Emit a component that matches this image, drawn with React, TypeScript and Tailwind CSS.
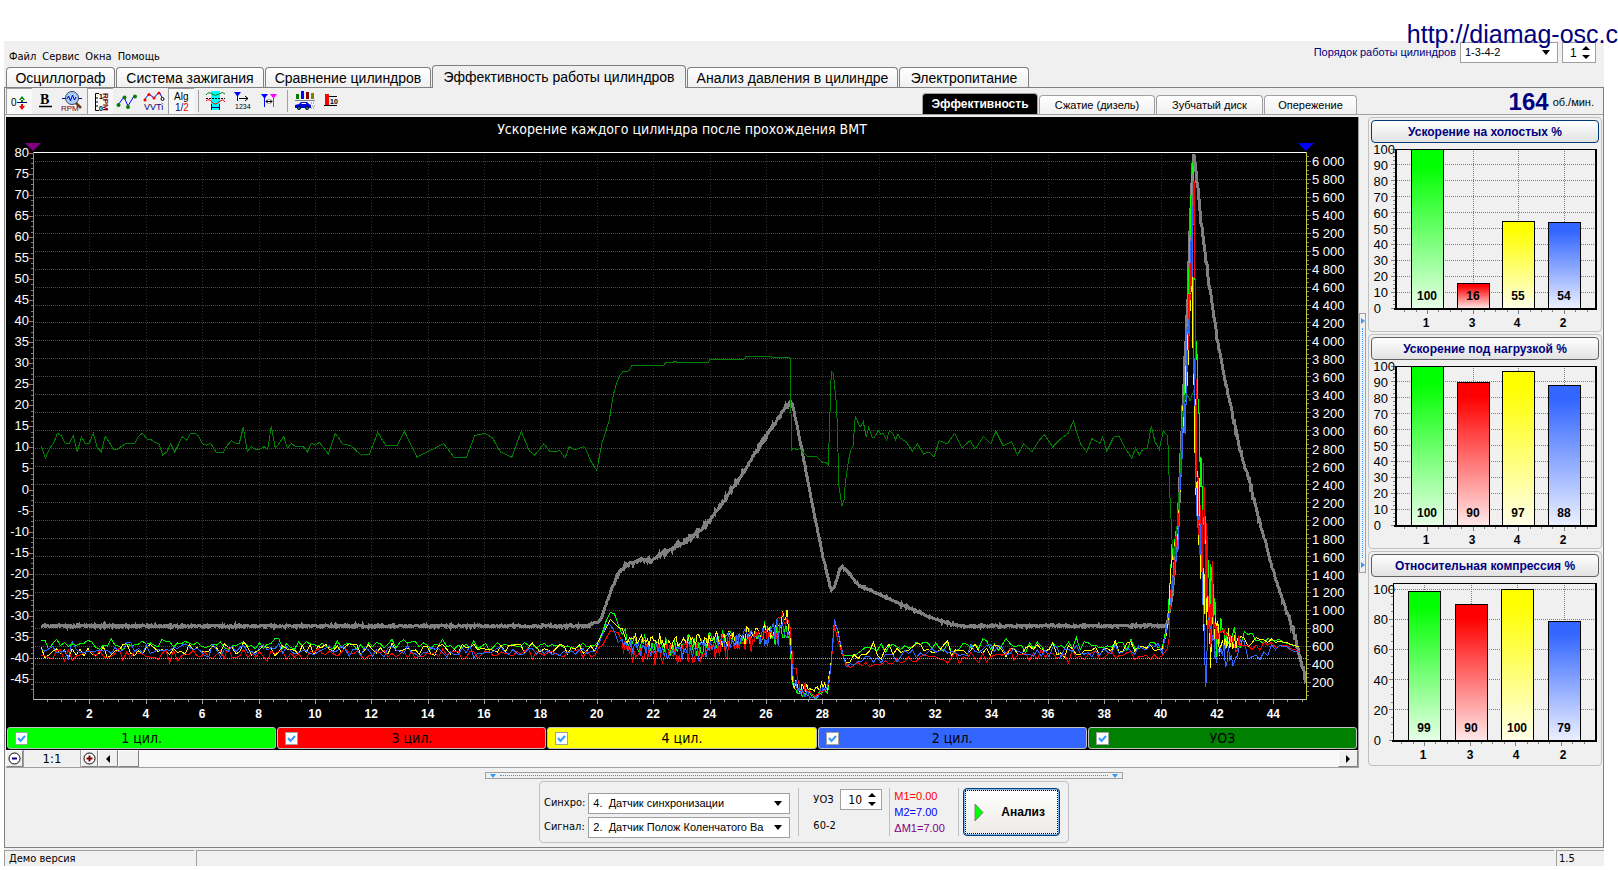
import React, { useMemo, useState } from 'react';

type Point = [number, number];
// x, y, noise amplitude
type Key = [number, number, number];

const SANS = "font-['Liberation_Sans',Arial,sans-serif]";
const TAHOMA = "font-['DejaVu_Sans_Condensed','DejaVu_Sans',Tahoma,sans-serif]";

// Plot frame of the main chart
const PLOT = { left: 33, right: 1306, top: 152, bottom: 699 };
const timeX = (t: number) => 33 + t * 28.19;
const leftY = (v: number) => 152.7 + (80 - v) * 4.21;
const rightY = (v: number) => 161.3 + (6000 - v) * 0.08983;

// Small seeded generator so the traces are the same on every render
function makeRandom(seed: number) {
  let s = seed;
  return () => {
    s = (s * 1664525 + 1013904223) % 4294967296;
    return s / 4294967296;
  };
}

function place(ox: number, oy: number, k: number, points: Point[]): Point[] {
  return points.map(([x, y]) => [ox + x * k, oy + y * k]);
}

function noisy(keys: Key[], seed: number, gain: number, stepAt: (x: number) => number): Point[] {
  const random = makeRandom(seed);
  const out: Point[] = [];
  let i = 0;
  let x = keys[0][0];
  const end = keys[keys.length - 1][0];
  while (x <= end) {
    while (i < keys.length - 2 && x > keys[i + 1][0]) i++;
    const [x0, y0, a0] = keys[i];
    const [x1, y1, a1] = keys[i + 1];
    const t = (x - x0) / (x1 - x0);
    const amp = a0 + (a1 - a0) * t;
    const n = (random() + random() - 1) * gain;
    out.push([x, Math.min(y0 + (y1 - y0) * t + n * amp, PLOT.bottom - 1)]);
    x += stepAt(x);
  }
  return out;
}

const toPath = (points: Point[]) => points.map(([x, y]) => `${x.toFixed(1)},${y.toFixed(1)}`).join(' ');

const ADVANCE: Point[] = [
  ...place(0, 410, 1 / 3, [
    [124, 108], [136, 145], [148, 117], [162, 97], [172, 70], [184, 77], [196, 100], [208, 100], [220, 78], [232, 126],
    [244, 80], [256, 100], [268, 100], [280, 69], [292, 114], [304, 125], [316, 79], [328, 97], [340, 118], [352, 118],
    [376, 101], [404, 100], [416, 78], [428, 70], [440, 87], [452, 88], [464, 98], [476, 100], [488, 135], [500, 127],
    [512, 101], [524, 126], [536, 102], [547, 80], [560, 91], [571, 70], [584, 70], [596, 78], [607, 101], [620, 106],
    [632, 100], [648, 127], [670, 127], [682, 106], [694, 92], [706, 100], [718, 100], [730, 52], [742, 125], [754, 110],
    [766, 118], [778, 118], [792, 110], [803, 118], [814, 49], [826, 114], [838, 100], [851, 79], [862, 115], [874, 101],
    [886, 108], [910, 110], [922, 126], [934, 100], [946, 106], [958, 97],
  ]),
  ...place(0, 0, 1.032, [
    [318, 440], [325, 420], [332, 430], [340, 432], [350, 441], [358, 440], [366, 419], [374, 432], [385, 432], [392, 418],
    [404, 443], [412, 439], [430, 430], [440, 443], [452, 443], [460, 422], [470, 420], [477, 424], [485, 438], [496, 443],
    [505, 418], [513, 437], [518, 441], [527, 430], [533, 438],
  ]),
  ...place(560, 340, 1 / 3, [
    [0, 332], [15, 355], [28, 320], [40, 327], [50, 327], [72, 320], [80, 333], [92, 363], [110, 391], [126, 310],
    [148, 240], [160, 165], [170, 128], [180, 106], [190, 94], [206, 93], [216, 76], [312, 76], [318, 66], [330, 68],
    [345, 65], [360, 68], [445, 67], [450, 58], [552, 58], [558, 49], [632, 50], [640, 52], [690, 52], [695, 332],
    [698, 325], [712, 330], [720, 326], [730, 338], [744, 350], [770, 350], [786, 367], [800, 369], [805, 376], [814, 94],
    [820, 100], [830, 200], [837, 440], [846, 498], [852, 480], [856, 430], [865, 365], [872, 333], [879, 318], [886, 228],
    [900, 262], [910, 245], [919, 292], [926, 262], [936, 292], [943, 292], [955, 272], [962, 282], [970, 280], [980, 300],
    [988, 272], [1000, 282], [1006, 300], [1014, 282], [1020, 294],
  ]),
  ...place(0, 0, 1.032, [
    [878, 428], [884, 437], [889, 430], [895, 440], [900, 438], [905, 443], [910, 427], [918, 430], [925, 420], [932, 434],
    [940, 427], [945, 435], [953, 423], [960, 430], [965, 418], [972, 432], [980, 428], [986, 441], [992, 430], [1000, 438],
    [1006, 428], [1012, 421], [1020, 433], [1028, 425], [1035, 420], [1040, 408], [1047, 430], [1053, 438], [1058, 425],
  ]),
  ...place(1100, 380, 1 / 3, [
    [0, 190], [8, 170], [20, 213], [42, 170], [58, 170], [70, 195], [95, 235], [107, 205], [118, 225], [130, 205],
    [142, 205], [154, 138], [165, 185], [178, 208], [190, 152], [203, 168], [208, 310], [216, 480], [222, 530], [232, 430],
    [240, 280], [248, 100], [256, 40], [265, 50], [270, 62], [282, 30],
  ]),
];

const SPEED: Key[] = [
  [41, 626, 1], [587, 626, 1], [600, 621, 1], [606, 605, 1], [612, 588, 1], [620, 570, 2], [630, 563, 2], [640, 560, 2],
  [652, 560, 2], [665, 553, 2], [680, 544, 2], [700, 531, 2], [710, 520, 2], [728, 495, 2], [745, 470, 2], [760, 445, 2],
  [775, 423, 2], [790, 401, 2], [792, 402, 1], [802, 450, 1], [812, 503, 1], [823, 557, 1], [831, 590, 1], [834, 588, 1],
  [840, 569, 1], [843, 567, 1], [850, 574, 1], [858, 585, 1], [870, 590, 1], [900, 604, 1], [930, 617, 1], [950, 624, 1],
  [965, 626, 1], [1167, 626, 1], [1172, 595, 2], [1178, 530, 4], [1182, 430, 6], [1186, 345, 8], [1188, 290, 10],
  [1190, 230, 10], [1192, 180, 8], [1194, 153, 1], [1200, 210, 4], [1205, 253, 4], [1210, 290, 4], [1218, 343, 4],
  [1227, 387, 4], [1238, 442, 3], [1247, 473, 3], [1260, 523, 3], [1273, 570, 2], [1282, 598, 2], [1290, 620, 3],
  [1300, 657, 4], [1306, 682, 4],
];

const CYL_1: Key[] = [
  [41, 645, 5], [597, 645, 3], [605, 625, 2], [610, 611, 1], [615, 613, 1], [621, 632, 4], [635, 645, 7], [700, 645, 8],
  [745, 638, 9], [760, 635, 8], [785, 630, 8], [790, 635, 8], [792, 685, 4], [800, 692, 4], [815, 696, 3], [828, 688, 3],
  [832, 660, 2], [835, 612, 1], [838, 630, 2], [843, 655, 4], [860, 652, 6], [900, 645, 6], [1164, 645, 5], [1168, 620, 3],
  [1172, 550, 16], [1178, 530, 10], [1182, 440, 16], [1187, 360, 24], [1190, 240, 20], [1193, 153, 1], [1196, 340, 20],
  [1200, 440, 30], [1204, 520, 30], [1210, 580, 30], [1216, 635, 20], [1235, 640, 8], [1260, 640, 5], [1280, 640, 1],
  [1301, 648, 1],
];

const CYL_3: Key[] = [
  [41, 656, 5], [597, 653, 4], [605, 640, 2], [612, 629, 2], [620, 640, 6], [635, 654, 8], [700, 654, 9], [740, 642, 8],
  [775, 634, 10], [782, 612, 8], [790, 625, 8], [793, 670, 8], [800, 688, 6], [815, 695, 4], [828, 688, 3], [832, 660, 2],
  [835, 618, 1], [838, 640, 2], [845, 665, 3], [860, 665, 3], [900, 661, 4], [1000, 655, 5], [1165, 655, 5], [1169, 640, 3],
  [1172, 570, 16], [1178, 540, 10], [1182, 450, 16], [1187, 360, 30], [1190, 300, 40], [1193, 230, 20], [1194, 182, 1],
  [1196, 380, 30], [1198, 520, 40], [1203, 530, 50], [1210, 590, 40], [1216, 640, 20], [1222, 632, 16], [1235, 645, 8],
  [1260, 647, 6], [1280, 644, 1], [1301, 652, 1],
];

const CYL_4: Key[] = [
  [41, 650, 6], [597, 648, 4], [605, 630, 2], [612, 620, 2], [621, 630, 6], [635, 643, 6], [700, 642, 7], [745, 635, 8],
  [775, 630, 9], [785, 618, 8], [790, 625, 8], [793, 685, 5], [800, 690, 5], [815, 689, 3], [828, 686, 3], [832, 660, 2],
  [835, 615, 1], [838, 634, 2], [845, 663, 4], [858, 657, 4], [870, 652, 8], [900, 650, 6], [1164, 650, 6], [1168, 620, 3],
  [1172, 555, 16], [1178, 535, 10], [1182, 440, 14], [1187, 370, 30], [1190, 320, 30], [1192, 290, 20], [1195, 410, 50],
  [1200, 560, 50], [1207, 610, 40], [1214, 640, 16], [1235, 640, 8], [1260, 640, 4], [1280, 641, 1], [1301, 648, 1],
];

const CYL_2: Key[] = [
  [41, 650, 6], [597, 652, 4], [605, 628, 3], [610, 620, 3], [621, 642, 6], [635, 650, 8], [700, 650, 7], [745, 638, 8],
  [775, 635, 9], [785, 628, 10], [790, 640, 8], [793, 680, 6], [800, 690, 5], [815, 696, 3], [828, 686, 3], [832, 660, 2],
  [835, 611, 1], [838, 634, 2], [845, 668, 3], [860, 662, 4], [900, 654, 6], [1164, 651, 5], [1168, 620, 3],
  [1172, 580, 12], [1178, 550, 10], [1182, 450, 16], [1187, 370, 40], [1190, 270, 40], [1192, 200, 10], [1195, 420, 60],
  [1200, 520, 40], [1203, 600, 20], [1206, 690, 2], [1208, 620, 10], [1216, 645, 16], [1225, 658, 14], [1240, 648, 8],
  [1260, 655, 5], [1280, 646, 2], [1292, 650, 1], [1302, 652, 1],
];

const stepAt = (x: number) => {
  if (x > 1176 && x < 1216) return 0.7;
  return (x > 620 && x < 830) || (x > 1166 && x < 1240) ? 1.5 : 3.9;
};

const SERIES = [
  { color: '#00ff00', points: noisy(CYL_1, 11, 1.7, stepAt) },
  { color: '#ffff00', points: noisy(CYL_4, 35, 1.7, stepAt) },
  { color: '#ff0000', points: noisy(CYL_3, 27, 1.7, stepAt) },
  { color: '#3366ff', points: noisy(CYL_2, 48, 1.7, stepAt) },
];
// Legend checkbox that switches each series
const SERIES_SWITCH = [0, 2, 1, 3];

const range = (from: number, to: number, step: number) => {
  const out: number[] = [];
  for (let v = from; v <= to + 1e-6; v += step) out.push(v);
  return out;
};

const px = (v: number) => Math.round(v) + 0.5;

function MainChart({ visible }: { visible: boolean[] }) {
  const speed = useMemo(() => noisy(SPEED, 5, 1.5, () => 0.8), []);
  return (
    <svg viewBox="6 117 1352 609" className={`block w-full ${SANS}`} role="img" aria-label="Ускорение каждого цилиндра">
      <rect x="6" y="117" width="1352" height="609" fill="#000" />
      <text x="682" y="134" fill="#fff" fontSize="14" textAnchor="middle" className={TAHOMA}>
        Ускорение каждого цилиндра после прохождения ВМТ
      </text>

      <g shapeRendering="crispEdges" fill="none">
        {range(2, 44, 2).map((t) => (
          <line key={t} x1={px(timeX(t))} x2={px(timeX(t))} y1={PLOT.top} y2={PLOT.bottom} stroke="#2e2e2e" strokeDasharray="1 2" />
        ))}
        {range(200, 6000, 200).map((v) => (
          <line key={v} x1={PLOT.left} x2={PLOT.right} y1={px(rightY(v) - 0.5)} y2={px(rightY(v) - 0.5)} stroke="#484848" strokeDasharray="1 1" />
        ))}

        {/* Axis ticks */}
        {range(-47.5, 80, 1.25).map((v) => (
          <line key={v} x1={v % 5 === 0 ? 29 : 31} x2="33" y1={px(leftY(v))} y2={px(leftY(v))} stroke="#808080" />
        ))}
        {range(50, 6050, 50).map((v) => (
          <line key={v} x1="1307" x2={v % 200 === 0 ? 1311 : 1309} y1={px(rightY(v) - 0.5)} y2={px(rightY(v) - 0.5)} stroke="#808080" />
        ))}
        {range(0.5, 45, 0.5).map((t) => (
          <line key={t} x1={px(timeX(t))} x2={px(timeX(t))} y1="700" y2={t % 2 === 0 ? 704 : 702} stroke="#a0a0a0" />
        ))}

        <polyline points={toPath(speed)} stroke="#808080" strokeWidth="3" />
        {SERIES.map((s, i) => visible[SERIES_SWITCH[i]] && <polyline key={s.color} points={toPath(s.points)} stroke={s.color} />)}
        {visible[4] && <polyline points={toPath(ADVANCE)} stroke="#008000" />}
        <line x1="33" x2="1306" y1="658.5" y2="658.5" stroke="#00ffff" strokeDasharray="1 1" />

        <line x1="33" x2="1306" y1="152.5" y2="152.5" stroke="#fff" />
        <line x1="33" x2="1307" y1="699.5" y2="699.5" stroke="#c0c0c0" />
        <line x1="33.5" x2="33.5" y1="152" y2="700" stroke="#40c040" />
        <line x1="1306.5" x2="1306.5" y1="152" y2="700" stroke="#c8c840" />
      </g>

      <path d="M25 143h16l-8 8z" fill="#800080" />
      <path d="M1298 143h16l-8 8z" fill="#0000ff" />

      <g fill="#fff" fontSize="13">
        {range(-45, 80, 5).map((v) => (
          <text key={v} x="29" y={leftY(v) + 4} textAnchor="end">{v}</text>
        ))}
        {range(200, 6000, 200).map((v) => (
          <text key={v} x="1312" y={rightY(v) + 5}>{v >= 1000 ? `${Math.floor(v / 1000)} ${String(v % 1000).padStart(3, '0')}` : v}</text>
        ))}
      </g>
      <g fill="#fff" fontSize="12" fontWeight="bold" textAnchor="middle">
        {range(2, 44, 2).map((t) => (
          <text key={t} x={timeX(t)} y="718">{t}</text>
        ))}
      </g>
    </svg>
  );
}

interface Bar {
  label: string;
  value: number;
  fill: string;
}

interface BarChartProps {
  title: string;
  bars: Bar[];
  centers: number[];
  step: number;
  // y of the 100% line, the frame may start above it
  fullY: number;
  left: number;
  base: number;
  focused?: boolean;
}

function BarPanel({ title, bars, centers, step, fullY, left, base, focused }: BarChartProps) {
  const y = (v: number) => base - (v / 100) * (base - fullY);
  const top = step === 20 ? 6 : fullY;
  return (
    <section className="rounded border border-[#c0c0c0] p-[2px]">
      <button
        className={`block h-[23px] w-full rounded-sm border bg-gradient-to-b from-white to-[#e2e2e2] text-xs font-bold text-[#000080] ${
          focused ? 'border-[#003c74]' : 'border-[#606060]'
        }`}
      >
        {title}
      </button>
      <svg viewBox="0 0 228 186" className={`block w-full ${SANS}`} role="img" aria-label={title}>
        <g shapeRendering="crispEdges">
          {range(step, 100, step).map((v) => (
            <line key={v} x1={left} x2="225" y1={px(y(v) - 0.5)} y2={px(y(v) - 0.5)} stroke="#808080" strokeDasharray="1 1" />
          ))}
          {centers.map((c) => (
            <line key={c} x1={c + 0.5} x2={c + 0.5} y1={top} y2={base} stroke="#808080" strokeDasharray="1 1" />
          ))}
          {range(0, 100, step / 4).map((v) => (
            <line key={v} x1={v % step === 0 ? left - 4 : left - 2} x2={left} y1={px(y(v) - 0.5)} y2={px(y(v) - 0.5)} stroke="#808080" />
          ))}
          {range(-2, 14, 1).map((i) => (
            <line
              key={i}
              x1={px(centers[0] + i * 11.4)}
              x2={px(centers[0] + i * 11.4)}
              y1={base + 2}
              y2={base + (i % 4 === 0 ? 6 : 4)}
              stroke="#808080"
            />
          ))}
          {bars.map((b, i) => (
            <rect
              key={b.label}
              x={centers[i] - 16 + 0.5}
              y={px(y(b.value))}
              width="32"
              height={base - Math.round(y(b.value))}
              fill={`url(#${b.fill})`}
              stroke="#000"
            />
          ))}
          <path d={`M${left} ${top + 0.5}H225`} stroke="#000" />
          <path d={`M${left + 0.5} ${top}V${base}`} stroke="#000" strokeWidth={step === 20 ? 1 : 2} />
          <path d={`M225 ${top}V${base + 1}`} stroke="#000" strokeWidth="2" />
          <path d={`M${left - 1} ${base + 1}H226`} stroke="#000" strokeWidth="2" />
        </g>
        <g fontSize="13">
          {range(0, 100, step).map((v) => (
            <text key={v} x={v === 100 ? 24 : v === 0 ? 10 : 17} y={y(v) + 5} textAnchor="end">
              {v}
            </text>
          ))}
        </g>
        <g fontSize="12" fontWeight="bold" textAnchor="middle">
          {bars.map((b, i) => (
            <React.Fragment key={b.label}>
              <text x={centers[i]} y={base - 8}>{b.value}</text>
              <text x={centers[i] - 1} y={base + 19}>{b.label}</text>
            </React.Fragment>
          ))}
        </g>
      </svg>
    </section>
  );
}

const makeBars = (values: number[]): Bar[] => [
  { label: '1', value: values[0], fill: 'fade-green' },
  { label: '3', value: values[1], fill: 'fade-red' },
  { label: '4', value: values[2], fill: 'fade-yellow' },
  { label: '2', value: values[3], fill: 'fade-blue' },
];

function Gradients() {
  const fades = [
    ['fade-green', '#00ff00', '#e8ffe8'],
    ['fade-red', '#ff0000', '#ffe8e8'],
    ['fade-yellow', '#ffff00', '#ffffe8'],
    ['fade-blue', '#3366ff', '#ecf0ff'],
  ];
  return (
    <svg width="0" height="0" className="absolute" aria-hidden="true">
      <defs>
        {fades.map(([id, from, to]) => (
          <linearGradient key={id} id={id} x1="0" y1="0" x2="0" y2="1">
            <stop offset="0.1" stopColor={from} />
            <stop offset="1" stopColor={to} />
          </linearGradient>
        ))}
      </defs>
    </svg>
  );
}

// Toolbar icons, drawn on a 24x24 grid
const TOOLS = [
  {
    label: 'Ноль',
    pressed: true,
    icon: (
      <>
        <text x="3" y="16" fontSize="10">0</text>
        <path d="M9 12.5h10" stroke="#000080" />
        <path d="M11 10h6l-3-4zM13 9h2v3h-2z" fill="#008000" />
        <path d="M11 16h6l-3 4zM13 14h2v3h-2z" fill="#ff0000" />
      </>
    ),
  },
  {
    label: 'Жирный',
    icon: (
      <>
        <text x="6" y="15" fontSize="14" fontWeight="bold" className="font-['Liberation_Serif',serif]">B</text>
        <path d="M5 17.500h13" stroke="#000" strokeWidth="1.500" />
      </>
    ),
  },
  {
    label: 'Обороты',
    icon: (
      <>
        <path d="M1 9.500h20" stroke="#000080" />
        <circle cx="11" cy="9" r="6.500" fill="#a8d0f8" stroke="#404060" />
        <path d="M6 10l1.500-3 2 5 2-6 2 5 1.500-3" fill="none" stroke="#0000c0" />
        <path d="M15 14l5 5" stroke="#604020" strokeWidth="2.500" />
        <text x="0" y="22" fontSize="8" fill="#800000">RPM</text>
      </>
    ),
  },
  {
    label: 'Шкала оборотов',
    pressed: true,
    icon: (
      <>
        <path d="M10 3.500H6.500v17H10M7 8h2M7 12h2M7 16h2" fill="none" stroke="#000" />
        <text x="10" y="9" fontSize="7" fontWeight="bold">1</text>
        <text x="10" y="21" fontSize="7" fontWeight="bold">0</text>
        <text x="3" y="-14" fontSize="8" fontWeight="bold" fill="#800000" transform="rotate(90)">RPM</text>
      </>
    ),
  },
  {
    label: 'Точки',
    icon: (
      <>
        <path d="M3 16L9 8l4 9 6-10" fill="none" stroke="#0000ff" />
        <g fill="#008000">
          <circle cx="3.500" cy="16" r="2" />
          <circle cx="9.500" cy="8.500" r="2" />
          <circle cx="13" cy="18" r="2" />
          <circle cx="20" cy="7.500" r="2" />
        </g>
      </>
    ),
  },
  {
    label: 'VVTi',
    icon: (
      <>
        <path d="M2 11l5-6 5 4 5-6 4 7" fill="none" stroke="#0000c0" />
        <g fill="#ff0000">
          <circle cx="3" cy="11" r="1.500" />
          <circle cx="7" cy="5.500" r="1.500" />
          <circle cx="12" cy="9" r="1.500" />
          <circle cx="17" cy="4" r="1.500" />
        </g>
        <circle cx="20.500" cy="10" r="1.500" fill="#fff" stroke="#000" />
        <text x="2" y="21" fontSize="9" fill="#000080">VVTi</text>
      </>
    ),
  },
  {
    label: 'Алгоритм',
    pressed: true,
    icon: (
      <>
        <text x="4" y="10" fontSize="10">Alg</text>
        <text x="5" y="21" fontSize="10" fill="#000080">1/<tspan fill="#ff0000">2</tspan></text>
      </>
    ),
  },
];

const TOOLS_2 = [
  {
    label: 'Период',
    icon: (
      <>
        <path d="M7 2h9v19H7z" fill="#00ffff" />
        <path d="M2 6q3-4 6-1t7 0 6 0" fill="none" stroke="#008000" />
        <path d="M2 9.500h19" stroke="#000" strokeDasharray="2 1" />
        <path d="M2 12q3-3 6 1t7 0 6 0" fill="none" stroke="#ff0000" />
        <path d="M7.500 15v6M15.500 15v6M8 18.500h7" stroke="#000080" />
      </>
    ),
  },
  {
    label: 'Метки 1234',
    icon: (
      <>
        <path d="M3 3h7L7 7v5H6V7z" fill="#0000ff" />
        <path d="M8 9.500h9M14 7l3 2.500-3 2.500" fill="none" stroke="#000" />
        <text x="4" y="20" fontSize="7">1234</text>
      </>
    ),
  },
  {
    label: 'Между метками',
    icon: (
      <>
        <path d="M3 5h7L7 9v9H6V9z" fill="#0000ff" />
        <path d="M12 5h7l-3 4v9h-1V9z" fill="#ff00ff" />
        <path d="M8 12.500h6M10 10.500l-2 2 2 2M12 10.500l2 2-2 2" fill="none" stroke="#000" />
      </>
    ),
  },
];

const TOOLS_3 = [
  {
    label: 'Автомобиль',
    icon: (
      <>
        <path d="M3 5h3v5H3z" fill="#008000" />
        <path d="M8 2h3v8H8z" fill="#0000ff" />
        <path d="M13 3h3v7h-3z" fill="#800000" />
        <path d="M18 4h3v6h-3z" fill="#808000" />
        <path d="M2 11.500h20" stroke="#808080" />
        <path d="M2 16l4-1 2-2h6l2 2 2 1v3H2z" fill="#0000e0" />
        <path d="M9 14h4v1H8z" fill="#fff" />
        <path d="M18 14h4M19 17h3M18 19h4" stroke="#808080" strokeDasharray="1 1" />
        <circle cx="6" cy="19" r="1.500" fill="#00a0a0" stroke="#000" />
        <circle cx="14" cy="19" r="1.500" fill="#00a0a0" stroke="#000" />
      </>
    ),
  },
  {
    label: 'Уровень 10',
    icon: (
      <>
        <path d="M5 5h4v11H5z" fill="#ff0000" />
        <path d="M9 7.500h8M4 16.500h13" stroke="#000" />
        <text x="10" y="15" fontSize="7" fontWeight="bold">10</text>
      </>
    ),
  },
];

function ToolGroup({ tools }: { tools: { label: string; pressed?: boolean; icon: React.ReactNode }[] }) {
  return (
    <div className="flex items-center gap-px">
      {tools.map((tool) => (
        <button
          key={tool.label}
          aria-label={tool.label}
          className={`flex h-[26px] w-[26px] items-center justify-center ${
            tool.pressed ? 'border-l border-t border-[#a0a0a0] bg-[#f8f8f8]' : ''
          }`}
        >
          <svg width="24" height="24" viewBox="0 0 24 24" className={SANS}>{tool.icon}</svg>
        </button>
      ))}
    </div>
  );
}

const MAIN_TABS = [
  { label: 'Осциллограф', width: 'w-[109px]' },
  { label: 'Система зажигания', width: 'w-[148px]' },
  { label: 'Сравнение цилиндров', width: 'w-[166px]' },
  { label: 'Эффективность работы цилиндров', width: 'w-[254px]' },
  { label: 'Анализ давления в цилиндре', width: 'w-[211px]' },
  { label: 'Электропитание', width: 'w-[130px]' },
];

const SUB_TABS = [
  { label: 'Эффективность', width: 'w-[116px]' },
  { label: 'Сжатие (дизель)', width: 'w-[116px]' },
  { label: 'Зубчатый диск', width: 'w-[107px]' },
  { label: 'Опережение', width: 'w-[93px]' },
];

const LEGEND = [
  { label: '1 цил.', bg: 'bg-[#00ff00]' },
  { label: '3 цил.', bg: 'bg-[#ff0000]' },
  { label: '4 цил.', bg: 'bg-[#ffff00]' },
  { label: '2 цил.', bg: 'bg-[#3366ff]' },
  { label: 'УОЗ', bg: 'bg-[#008000]' },
];

function Dropdown({ id, value, width, label }: { id: string; value: string; width: string; label?: string }) {
  return (
    <div className={`relative ${width}`}>
      <select
        id={id}
        aria-label={label}
        defaultValue={value}
        className="block h-[21px] w-full appearance-none border border-[#a0a0a0] bg-white pr-5 pl-1 text-[11px]"
      >
        <option>{value}</option>
      </select>
      <svg width="8" height="5" className="pointer-events-none absolute top-2 right-2">
        <path d="M0 0h8L4 5z" />
      </svg>
    </div>
  );
}

function Spinner({ id, value, width, label }: { id: string; value: number; width: string; label?: string }) {
  return (
    <div className={`relative ${width}`}>
      <input
        id={id}
        aria-label={label}
        type="number"
        defaultValue={value}
        className="block h-[21px] w-full border border-[#a0a0a0] bg-white pl-[7px] text-xs [appearance:textfield] [&::-webkit-inner-spin-button]:appearance-none"
      />
      <svg width="8" height="13" className="pointer-events-none absolute top-1 right-[6px]">
        <path d="M0 4h8L4 0zM0 9h8l-4 4z" />
      </svg>
    </div>
  );
}

const raised = 'border border-t-white border-l-white border-r-[#808080] border-b-[#808080] bg-[#f0f0f0]';

export default function App() {
  const [tab, setTab] = useState(3);
  const [subTab, setSubTab] = useState(0);
  const [visible, setVisible] = useState([true, true, true, true, true]);

  const toggle = (index: number) => {
    setVisible((prev) => prev.map((v, i) => (i === index ? !v : v)));
  };

  return (
    <div className={`relative min-h-screen overflow-hidden bg-white pt-[41px] pr-[14px] pb-1 pl-1 text-black ${SANS}`}>
      <Gradients />
      <a href="http://diamag-osc.com" className="absolute top-5 right-0 z-10 text-[25px] leading-7 whitespace-nowrap text-[#000080]">
        http://diamag-osc.c
      </a>

      <div className="bg-[#f0f0f0]">
        {/* Menu */}
        <header className="flex h-6 items-start justify-between">
          <nav className={`flex gap-[6px] pt-[10px] pl-[5px] text-[11px] leading-3 ${TAHOMA}`}>
            {['Файл', 'Сервис', 'Окна', 'Помощь'].map((item) => (
              <button key={item}>{item}</button>
            ))}
          </nav>
          <div className="flex items-center gap-1 pt-px pr-2">
            <label htmlFor="order" className="text-[11px] text-[#000080]">Порядок работы цилиндров</label>
            <Dropdown id="order" value="1-3-4-2" width="w-[98px]" />
            <Spinner id="first" value={1} width="w-[34px]" label="Первый цилиндр" />
          </div>
        </header>

        {/* Main tabs */}
        <div className="flex h-[23px] items-end gap-px border-b border-[#808080] pl-[2px]">
          {MAIN_TABS.map((t, i) => (
            <button
              key={t.label}
              onClick={() => setTab(i)}
              className={`rounded-t border border-b-0 border-[#808080] text-sm leading-4 whitespace-nowrap ${t.width} ${
                i === tab ? '-mb-px h-[23px] bg-[#f0f0f0]' : 'h-5 bg-gradient-to-b from-white to-[#f0f0f0]'
              }`}
            >
              {t.label}
            </button>
          ))}
        </div>

        <main className="border-r border-b border-l border-[#808080]">
          {/* Toolbar */}
          <div className="flex h-[27px] items-end border-b border-[#a0a0a0] pl-px">
            <div className="flex items-center">
              <ToolGroup tools={TOOLS} />
              <div className="mx-1 h-[22px] w-px bg-[#a0a0a0]" />
              <ToolGroup tools={TOOLS_2} />
              <div className="mx-1 h-[22px] w-px bg-[#a0a0a0]" />
              <ToolGroup tools={TOOLS_3} />
            </div>
            <div className="ml-auto flex items-end gap-px">
              {SUB_TABS.map((t, i) => (
                <button
                  key={t.label}
                  onClick={() => setSubTab(i)}
                  className={`rounded-t-sm border border-b-0 border-[#a0a0a0] whitespace-nowrap ${t.width} ${
                    i === subTab ? 'h-[21px] bg-black text-xs font-bold text-white' : 'h-[19px] bg-gradient-to-b from-white to-[#f0f0f0] text-[11px]'
                  }`}
                >
                  {t.label}
                </button>
              ))}
            </div>
            <div className="flex w-[246px] items-center justify-end gap-1 pr-[9px]">
              <span className="text-2xl leading-6 font-bold text-[#000080]">164</span>
              <span className="text-[11px]">об./мин.</span>
            </div>
          </div>

          <div className="flex items-start pt-[2px] pl-px">
            {/* Chart column */}
            <div className="min-w-0 flex-1 border-r border-b border-[#a0a0a0]">
              <MainChart visible={visible} />
              <div className={`grid grid-cols-5 gap-px bg-black px-px pt-px pb-px text-sm ${TAHOMA}`}>
                {LEGEND.map((item, i) => (
                  <label key={item.label} className={`relative flex h-[22px] items-center justify-center rounded-[3px] border border-[#c0c0c0] ${item.bg}`}>
                    <span className="absolute left-[7px] h-[13px] w-[13px]">
                      <input
                        type="checkbox"
                        checked={visible[i]}
                        onChange={() => toggle(i)}
                        className="peer block h-[13px] w-[13px] appearance-none border border-[#a0a0a0] bg-white"
                      />
                      <svg viewBox="0 0 13 13" className="pointer-events-none absolute inset-0 hidden peer-checked:block">
                        <path d="M3 6l2.500 3L10 4" fill="none" stroke="#3399ff" strokeWidth="2" />
                      </svg>
                    </span>
                    {item.label}
                  </label>
                ))}
              </div>
              <div className="flex h-[17px] bg-[#f8f8f8]">
                <button aria-label="Уменьшить" className={`flex w-[17px] items-center justify-center ${raised}`}>
                  <svg width="13" height="13" viewBox="0 0 13 13" className="shrink-0">
                    <circle cx="6.500" cy="6.500" r="5.500" fill="#fff" stroke="#000" />
                    <path d="M4 6.500h5" stroke="#000080" strokeWidth="2" />
                  </svg>
                </button>
                <div className={`w-[58px] border-x border-[#a0a0a0] bg-[#f0f0f0] text-center text-[13px] leading-[18px] ${TAHOMA}`}>1:1</div>
                <button aria-label="Увеличить" className={`flex w-[17px] items-center justify-center ${raised}`}>
                  <svg width="13" height="13" viewBox="0 0 13 13" className="shrink-0">
                    <circle cx="6.500" cy="6.500" r="5.500" fill="#fff" stroke="#000" />
                    <path d="M3.500 6.500h6M6.500 3.500v6" stroke="#800000" strokeWidth="2" />
                  </svg>
                </button>
                <button aria-label="Влево" className={`flex w-5 items-center justify-center ${raised}`}>
                  <svg width="4" height="8"><path d="M4 0v8L0 4z" /></svg>
                </button>
                <div className={`w-[21px] ${raised}`} />
                <button aria-label="Вправо" className={`ml-auto flex w-5 items-center justify-center ${raised}`}>
                  <svg width="4" height="8"><path d="M0 0v8l4-4z" /></svg>
                </button>
              </div>
            </div>

            {/* Side splitter */}
            <div className="flex h-[260px] w-[7px] flex-col items-center justify-between self-center border border-[#a0a0a0] py-1">
              <svg width="4" height="6"><path d="M0 0v6l4-3z" fill="#3399ff" /></svg>
              <div className="my-1 w-px flex-1 border-l border-dotted border-[#3399ff]" />
              <svg width="4" height="6"><path d="M0 0v6l4-3z" fill="#3399ff" /></svg>
            </div>

            {/* Bar charts */}
            <aside className="flex w-[237px] flex-col gap-[2px] pr-px pl-[2px]">
              <BarPanel title="Ускорение на холостых %" bars={makeBars([100, 16, 55, 54])} centers={[56, 102, 147, 193]} step={10} fullY={6} left={24} base={165} focused />
              <BarPanel title="Ускорение под нагрузкой %" bars={makeBars([100, 90, 97, 88])} centers={[56, 102, 147, 193]} step={10} fullY={6} left={24} base={165} />
              <BarPanel title="Относительная компрессия %" bars={makeBars([99, 90, 100, 79])} centers={[53, 100, 146, 193]} step={20} fullY={12} left={22} base={163} />
            </aside>
          </div>

          {/* Bottom splitter */}
          <div className="mx-auto mt-1 flex h-[7px] w-[638px] items-center justify-between border border-[#a0a0a0] px-1">
            <svg width="6" height="4"><path d="M0 0h6L3 4z" fill="#3399ff" /></svg>
            <div className="mx-1 flex-1 border-t border-dotted border-[#3399ff]" />
            <svg width="6" height="4"><path d="M0 0h6L3 4z" fill="#3399ff" /></svg>
          </div>

          {/* Analysis controls */}
          <section className="mx-auto mt-[2px] mb-1 flex h-[62px] w-[530px] items-center rounded border border-[#c0c0c0] pl-1">
            <div className="grid grid-cols-[auto_1fr] items-center gap-x-[3px] gap-y-[3px] pt-[6px]">
              <label htmlFor="sync" className={`text-[11px] ${TAHOMA}`}>Синхро:</label>
              <Dropdown id="sync" value={'4.\u00a0\u00a0Датчик синхронизации'} width="w-[202px]" />
              <label htmlFor="signal" className={`text-[11px] ${TAHOMA}`}>Сигнал:</label>
              <Dropdown id="signal" value={'2.\u00a0\u00a0Датчик Полож Коленчатого Ва'} width="w-[202px]" />
            </div>
            <div className="mr-[14px] ml-2 h-12 w-px bg-[#c0c0c0]" />
            <div className={`flex w-[69px] flex-col gap-2 text-[11px] ${TAHOMA}`}>
              <div className="flex items-center justify-between">
                <label htmlFor="advance">УОЗ</label>
                <Spinner id="advance" value={10} width="w-[42px]" />
              </div>
              <div>60-2</div>
            </div>
            <div className="mr-1 ml-[7px] h-12 w-px bg-[#c0c0c0]" />
            <div className="w-[60px] text-[11px] leading-4">
              <div className="text-[#ff0000]">M1=0.00</div>
              <div className="text-[#0000ff]">M2=7.00</div>
              <div className="text-[#800080]">ΔM1=7.00</div>
            </div>
            <div className="mr-1 ml-1 h-12 w-px bg-[#c0c0c0]" />
            <button className="h-12 w-[97px] rounded-sm border border-[#003c74] bg-[#80b8f0] p-px">
              <span className="flex h-full items-center gap-[17px] border border-dotted border-black bg-gradient-to-b from-white to-[#ecebe6] pl-2 text-xs font-bold">
                <svg width="10" height="19"><path d="M1 1v17l8-8.500z" fill="#00ff00" stroke="#808080" /></svg>
                Анализ
              </span>
            </button>
          </section>
        </main>

        {/* Status bar */}
        <footer className={`mt-[2px] flex gap-[2px] text-[11px] leading-4 ${TAHOMA}`}>
          <div className="h-4 w-[190px] border-t border-l border-[#a0a0a0] pl-1">Демо версия</div>
          <div className="h-4 flex-1 border-t border-l border-[#a0a0a0]" />
          <div className="h-4 w-12 border-t border-l border-[#a0a0a0] pl-[2px]">1.5</div>
        </footer>
      </div>
    </div>
  );
}
